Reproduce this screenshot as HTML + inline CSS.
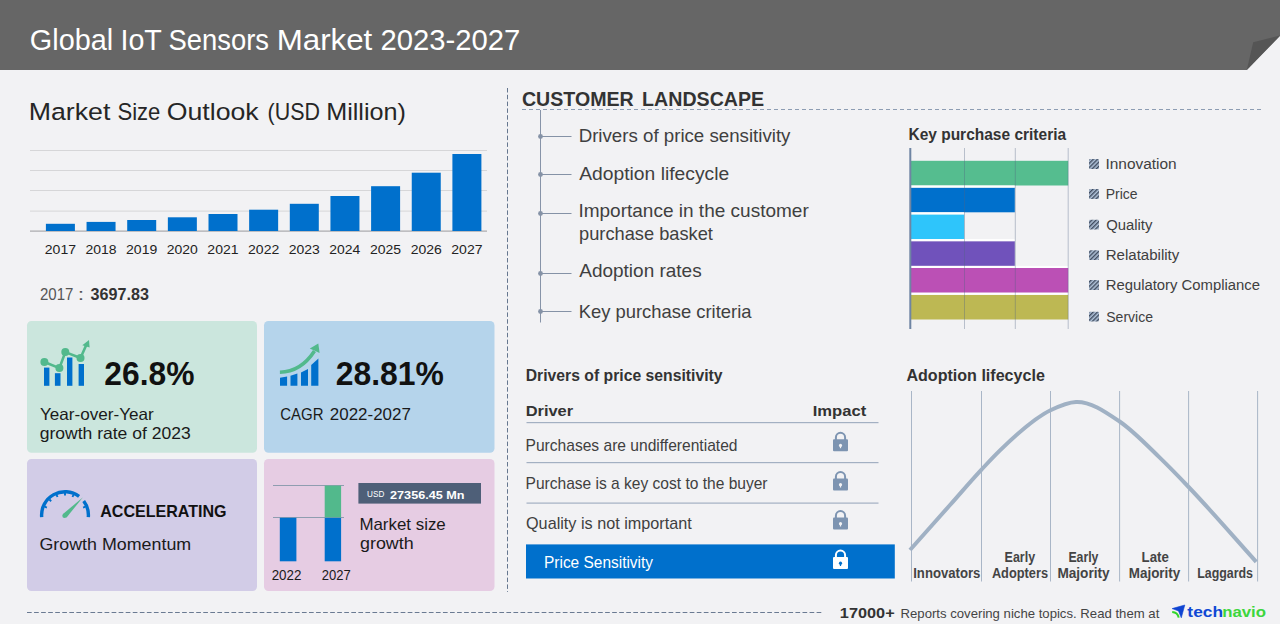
<!DOCTYPE html>
<html><head><meta charset="utf-8"><style>
html,body{margin:0;padding:0;background:#f2f2f4;width:1280px;height:624px;overflow:hidden}
svg{display:block}
text{font-family:"Liberation Sans",sans-serif;white-space:pre}
</style></head><body>
<svg width="1280" height="624" viewBox="0 0 1280 624">
<rect x="0" y="0" width="1280" height="624" fill="#f2f2f4"/>
<polygon points="0,0 1280,0 1280,36 1246.8,70 0,70" fill="#666666"/>
<polygon points="1246.8,70 1253.2,42.3 1280,35.5" fill="#555555"/>
<rect x="30" y="150" width="457" height="1" fill="#d6d6d8"/>
<rect x="30" y="170" width="457" height="1" fill="#d6d6d8"/>
<rect x="30" y="190" width="457" height="1" fill="#d6d6d8"/>
<rect x="30" y="210.6" width="457" height="1" fill="#d6d6d8"/>
<rect x="30" y="230.5" width="457" height="1.2" fill="#a9a9ab"/>
<rect x="45.90" y="223.8" width="29.0" height="7.20" fill="#0070cc"/>
<rect x="86.55" y="221.9" width="29.0" height="9.10" fill="#0070cc"/>
<rect x="127.20" y="220" width="29.0" height="11.00" fill="#0070cc"/>
<rect x="167.85" y="217.3" width="29.0" height="13.70" fill="#0070cc"/>
<rect x="208.50" y="214" width="29.0" height="17.00" fill="#0070cc"/>
<rect x="249.15" y="209.7" width="29.0" height="21.30" fill="#0070cc"/>
<rect x="289.80" y="203.8" width="29.0" height="27.20" fill="#0070cc"/>
<rect x="330.45" y="196" width="29.0" height="35.00" fill="#0070cc"/>
<rect x="371.10" y="186.2" width="29.0" height="44.80" fill="#0070cc"/>
<rect x="411.75" y="172.7" width="29.0" height="58.30" fill="#0070cc"/>
<rect x="452.40" y="154" width="29.0" height="77.00" fill="#0070cc"/>
<rect x="27" y="321" width="230" height="131.8" rx="4.5" fill="#cbe6dd"/>
<rect x="264" y="321" width="230.5" height="131.8" rx="4.5" fill="#b5d4eb"/>
<rect x="27" y="459" width="230" height="132" rx="4.5" fill="#d2cce7"/>
<rect x="264" y="459" width="230.5" height="132" rx="4.5" fill="#e6cce3"/>
<rect x="44" y="367.6" width="5.399999999999999" height="18.20" fill="#0070cc"/>
<rect x="54.9" y="373.2" width="5.600000000000001" height="12.60" fill="#0070cc"/>
<rect x="67" y="357.5" width="5.400000000000006" height="28.30" fill="#0070cc"/>
<rect x="78.6" y="364" width="5.400000000000006" height="21.80" fill="#0070cc"/>
<polyline points="44.4,362 59.4,368.1 65.3,352.1 80.5,358 86.5,344.5" fill="none" stroke="#52b98c" stroke-width="2.6" stroke-linejoin="round"/>
<circle cx="44.4" cy="362" r="4" fill="#52b98c"/>
<circle cx="59.4" cy="368.1" r="4" fill="#52b98c"/>
<circle cx="65.3" cy="352.1" r="4" fill="#52b98c"/>
<circle cx="80.5" cy="358" r="4" fill="#52b98c"/>
<polygon points="89,340 82.3,345.2 89.6,347.6" fill="#52b98c"/>
<polygon points="280,377.8 287.1,376.5 287.1,385.7 280,385.7" fill="#0070cc"/>
<polygon points="290.5,375.8 297.4,373.6 297.4,385.7 290.5,385.7" fill="#0070cc"/>
<polygon points="301,372.5 308,369.0 308,385.7 301,385.7" fill="#0070cc"/>
<polygon points="311.2,365 318.4,358.6 318.4,385.7 311.2,385.7" fill="#0070cc"/>
<path d="M279.9,372.2 C294,372 306,364 314.5,351" fill="none" stroke="#52b98c" stroke-width="3.6"/>
<polygon points="318.3,343.6 309.8,348.6 319.6,353" fill="#52b98c"/>
<path d="M41.69,517.14 A23.4,23.4 0 0 1 79.08,496.41" fill="none" stroke="#0070cc" stroke-width="3.4"/>
<path d="M83.69,501.02 A23.4,23.4 0 0 1 88.31,517.14" fill="none" stroke="#0070cc" stroke-width="3.4"/>
<line x1="44.67" y1="506.68" x2="46.89" y2="507.60" stroke="#0070cc" stroke-width="1.9"/>
<line x1="49.44" y1="499.54" x2="51.14" y2="501.24" stroke="#0070cc" stroke-width="1.9"/>
<line x1="56.58" y1="494.77" x2="57.50" y2="496.99" stroke="#0070cc" stroke-width="1.9"/>
<line x1="65.00" y1="493.10" x2="65.00" y2="495.50" stroke="#0070cc" stroke-width="1.9"/>
<line x1="73.42" y1="494.77" x2="72.50" y2="496.99" stroke="#0070cc" stroke-width="1.9"/>
<line x1="85.33" y1="506.68" x2="83.11" y2="507.60" stroke="#0070cc" stroke-width="1.9"/>
<polygon points="63,514 66.6,517.4 83,497.2" fill="#52b98c"/>
<circle cx="64.6" cy="515.8" r="2.3" fill="#52b98c"/>
<rect x="273" y="485" width="71" height="1" fill="#8f9db0"/>
<rect x="273" y="517" width="71" height="1" fill="#8f9db0"/>
<rect x="279.8" y="517.8" width="16.6" height="43.5" fill="#0070cc"/>
<rect x="324.7" y="517.8" width="16.4" height="43.5" fill="#0070cc"/>
<rect x="324.7" y="485.6" width="16.4" height="31.7" fill="#52b98c"/>
<rect x="358.4" y="483" width="122.6" height="20.6" fill="#4e5f78"/>
<line x1="507.5" y1="88" x2="507.5" y2="592" stroke="#66778f" stroke-width="1" stroke-dasharray="4.5 2.3"/>
<line x1="27" y1="612.5" x2="823" y2="612.5" stroke="#6a7a92" stroke-width="1" stroke-dasharray="4.7 2.35"/>
<line x1="522" y1="109.5" x2="1262" y2="109.5" stroke="#8d9db3" stroke-width="1" stroke-dasharray="4 3"/>
<rect x="540" y="110" width="1" height="212.5" fill="#8794a8"/>
<rect x="540" y="136" width="31.5" height="1" fill="#8592a6"/>
<circle cx="540.5" cy="136.5" r="2.4" fill="#8592a6"/>
<rect x="540" y="174" width="31.5" height="1" fill="#8592a6"/>
<circle cx="540.5" cy="174.5" r="2.4" fill="#8592a6"/>
<rect x="540" y="213" width="31.5" height="1" fill="#8592a6"/>
<circle cx="540.5" cy="213.5" r="2.4" fill="#8592a6"/>
<rect x="540" y="273" width="31.5" height="1" fill="#8592a6"/>
<circle cx="540.5" cy="273.5" r="2.4" fill="#8592a6"/>
<rect x="540" y="311" width="31.5" height="1" fill="#8592a6"/>
<circle cx="540.5" cy="311.5" r="2.4" fill="#8592a6"/>
<rect x="911" y="160.8" width="157.2" height="24.7" fill="#55bd8f"/>
<rect x="911" y="187.6" width="103.8" height="24.7" fill="#0070cc"/>
<rect x="911" y="185.5" width="103.8" height="2.1" fill="#ffffff"/>
<rect x="911" y="214.4" width="53.2" height="24.7" fill="#2ec5fb"/>
<rect x="911" y="212.3" width="53.2" height="2.1" fill="#ffffff"/>
<rect x="911" y="241.2" width="103.8" height="24.7" fill="#7052bb"/>
<rect x="911" y="239.1" width="103.8" height="2.1" fill="#ffffff"/>
<rect x="911" y="268.0" width="157.2" height="24.7" fill="#bb50b5"/>
<rect x="911" y="265.9" width="157.2" height="2.1" fill="#ffffff"/>
<rect x="911" y="294.8" width="157.2" height="24.7" fill="#bdb853"/>
<rect x="911" y="292.7" width="157.2" height="2.1" fill="#ffffff"/>
<rect x="964.0" y="148" width="1" height="181" fill="rgb(80,100,130)" fill-opacity="0.36"/>
<rect x="1014.8" y="148" width="1" height="181" fill="rgb(80,100,130)" fill-opacity="0.36"/>
<rect x="1067.7" y="148" width="1" height="181" fill="rgb(80,100,130)" fill-opacity="0.36"/>
<rect x="909.3" y="148" width="2" height="181" fill="#6f85a3"/>
<defs><pattern id="hatch" width="3" height="3" patternUnits="userSpaceOnUse" patternTransform="rotate(45)"><rect width="3" height="3" fill="#b0c2d8"/><rect width="1.4" height="3" fill="#3f4b5e"/></pattern></defs>
<rect x="1089" y="159.1" width="10" height="9.8" rx="1" fill="url(#hatch)"/>
<rect x="1089" y="189.1" width="10" height="9.8" rx="1" fill="url(#hatch)"/>
<rect x="1089" y="219.8" width="10" height="9.8" rx="1" fill="url(#hatch)"/>
<rect x="1089" y="250.3" width="10" height="9.8" rx="1" fill="url(#hatch)"/>
<rect x="1089" y="280.1" width="10" height="9.8" rx="1" fill="url(#hatch)"/>
<rect x="1089" y="311.8" width="10" height="9.8" rx="1" fill="url(#hatch)"/>
<rect x="526.5" y="422.0" width="352" height="1.2" fill="#a3b0c2"/>
<rect x="526.5" y="462.0" width="352" height="1.2" fill="#a3b0c2"/>
<rect x="526.5" y="502.5" width="352" height="1.2" fill="#a3b0c2"/>
<rect x="526" y="544.4" width="368.8" height="34.1" fill="#0070cc"/>
<path d="M835.9,440.2 V437.4 A4.6,4.6 0 0 1 845.1,437.4 V440.2" fill="none" stroke="#7d94b1" stroke-width="2"/>
<rect x="833.0" y="439.2" width="15" height="12" rx="1" fill="#7d94b1"/>
<circle cx="840.5" cy="445.4" r="1.6" fill="#f2f2f4"/>
<rect x="839.9" y="445.4" width="1.2" height="2.8" fill="#f2f2f4"/>
<path d="M835.9,479.5 V476.7 A4.6,4.6 0 0 1 845.1,476.7 V479.5" fill="none" stroke="#7d94b1" stroke-width="2"/>
<rect x="833.0" y="478.5" width="15" height="12" rx="1" fill="#7d94b1"/>
<circle cx="840.5" cy="484.7" r="1.6" fill="#f2f2f4"/>
<rect x="839.9" y="484.7" width="1.2" height="2.8" fill="#f2f2f4"/>
<path d="M835.9,518.5 V515.7 A4.6,4.6 0 0 1 845.1,515.7 V518.5" fill="none" stroke="#7d94b1" stroke-width="2"/>
<rect x="833.0" y="517.5" width="15" height="12" rx="1" fill="#7d94b1"/>
<circle cx="840.5" cy="523.7" r="1.6" fill="#f2f2f4"/>
<rect x="839.9" y="523.7" width="1.2" height="2.8" fill="#f2f2f4"/>
<path d="M835.9,558 V555.2 A4.6,4.6 0 0 1 845.1,555.2 V558" fill="none" stroke="#ffffff" stroke-width="2"/>
<rect x="833.0" y="557" width="15" height="12" rx="1" fill="#ffffff"/>
<circle cx="840.5" cy="563.2" r="1.6" fill="#0070cc"/>
<rect x="839.9" y="563.2" width="1.2" height="2.8" fill="#0070cc"/>
<rect x="911.0" y="391" width="1" height="190.5" fill="#a9b6c7"/>
<rect x="981.0" y="391" width="1" height="190.5" fill="#a9b6c7"/>
<rect x="1050.0" y="391" width="1" height="190.5" fill="#a9b6c7"/>
<rect x="1119.1" y="391" width="1" height="190.5" fill="#a9b6c7"/>
<rect x="1188.1" y="391" width="1" height="190.5" fill="#a9b6c7"/>
<rect x="1257.1" y="391" width="1" height="190.5" fill="#a9b6c7"/>
<path d="M910.0,550.0 C923.3,535.0 936.7,520.0 950.0,505.0 C960.5,493.2 971.0,480.8 981.5,469.6 C987.7,463.0 993.8,456.4 1000.0,450.4 C1016.8,434.0 1033.7,418.3 1050.5,410.2 C1059.0,406.1 1067.5,402.2 1076.0,401.9 C1090.5,401.3 1105.1,411.6 1119.6,421.5 C1133.1,430.7 1146.5,444.8 1160.0,457.9 C1169.5,467.1 1179.1,477.0 1188.6,487.0 C1211.1,510.5 1233.7,536.9 1256.2,561.8" fill="none" stroke="#a0b1c4" stroke-width="4" stroke-linecap="butt"/>
<polygon points="1172.1,608.6 1184.8,605.0 1181.3,617.8 1178.5,610.9" fill="#0f44d2" stroke="#0f44d2" stroke-width="0.6" stroke-linejoin="round"/>
<path d="M1172.2,612.0 Q1177.6,612.4 1178.7,617.6" fill="none" stroke="#33d62a" stroke-width="2"/>
<text x="29.80" y="49.50" textLength="83.38" lengthAdjust="spacingAndGlyphs" font-size="29.5" font-weight="400" fill="#ffffff">Global</text>
<text x="120.45" y="49.50" textLength="41.46" lengthAdjust="spacingAndGlyphs" font-size="29.5" font-weight="400" fill="#ffffff">IoT</text>
<text x="168.56" y="49.50" textLength="100.53" lengthAdjust="spacingAndGlyphs" font-size="29.5" font-weight="400" fill="#ffffff">Sensors</text>
<text x="276.73" y="49.50" textLength="95.59" lengthAdjust="spacingAndGlyphs" font-size="29.5" font-weight="400" fill="#ffffff">Market</text>
<text x="380.43" y="49.50" textLength="139.79" lengthAdjust="spacingAndGlyphs" font-size="29.5" font-weight="400" fill="#ffffff">2023-2027</text>
<text x="28.71" y="120.00" textLength="81.69" lengthAdjust="spacingAndGlyphs" font-size="24.3" font-weight="400" fill="#262626">Market</text>
<text x="117.40" y="120.00" textLength="42.99" lengthAdjust="spacingAndGlyphs" font-size="24.3" font-weight="400" fill="#262626">Size</text>
<text x="166.74" y="120.00" textLength="91.98" lengthAdjust="spacingAndGlyphs" font-size="24.3" font-weight="400" fill="#262626">Outlook</text>
<text x="267.57" y="120.00" textLength="52.35" lengthAdjust="spacingAndGlyphs" font-size="24.3" font-weight="400" fill="#262626">(USD</text>
<text x="326.23" y="120.00" textLength="79.73" lengthAdjust="spacingAndGlyphs" font-size="24.3" font-weight="400" fill="#262626">Million)</text>
<text x="44.79" y="253.50" textLength="31.21" lengthAdjust="spacingAndGlyphs" font-size="13.2" font-weight="400" fill="#222222">2017</text>
<text x="85.45" y="253.50" textLength="31.11" lengthAdjust="spacingAndGlyphs" font-size="13.2" font-weight="400" fill="#222222">2018</text>
<text x="126.09" y="253.50" textLength="31.17" lengthAdjust="spacingAndGlyphs" font-size="13.2" font-weight="400" fill="#222222">2019</text>
<text x="166.75" y="253.50" textLength="31.05" lengthAdjust="spacingAndGlyphs" font-size="13.2" font-weight="400" fill="#222222">2020</text>
<text x="207.39" y="253.50" textLength="31.19" lengthAdjust="spacingAndGlyphs" font-size="13.2" font-weight="400" fill="#222222">2021</text>
<text x="248.04" y="253.50" textLength="31.21" lengthAdjust="spacingAndGlyphs" font-size="13.2" font-weight="400" fill="#222222">2022</text>
<text x="288.70" y="253.50" textLength="31.12" lengthAdjust="spacingAndGlyphs" font-size="13.2" font-weight="400" fill="#222222">2023</text>
<text x="329.35" y="253.50" textLength="30.91" lengthAdjust="spacingAndGlyphs" font-size="13.2" font-weight="400" fill="#222222">2024</text>
<text x="370.00" y="253.50" textLength="31.09" lengthAdjust="spacingAndGlyphs" font-size="13.2" font-weight="400" fill="#222222">2025</text>
<text x="410.65" y="253.50" textLength="31.12" lengthAdjust="spacingAndGlyphs" font-size="13.2" font-weight="400" fill="#222222">2026</text>
<text x="451.29" y="253.50" textLength="31.21" lengthAdjust="spacingAndGlyphs" font-size="13.2" font-weight="400" fill="#222222">2027</text>
<text x="39.94" y="299.80" textLength="33.41" lengthAdjust="spacingAndGlyphs" font-size="16" font-weight="400" fill="#555555">2017</text>
<text x="77.70" y="299.80" textLength="6.40" lengthAdjust="spacingAndGlyphs" font-size="16" font-weight="400" fill="#555555">:</text>
<text x="90.63" y="299.80" textLength="58.25" lengthAdjust="spacingAndGlyphs" font-size="16" font-weight="700" fill="#333333">3697.83</text>
<text x="104.30" y="384.60" textLength="90.14" lengthAdjust="spacingAndGlyphs" font-size="33" font-weight="700" fill="#111111">26.8%</text>
<text x="40.02" y="420.00" textLength="113.76" lengthAdjust="spacingAndGlyphs" font-size="16.5" font-weight="400" fill="#1a1a1a">Year-over-Year</text>
<text x="39.66" y="438.70" textLength="151.11" lengthAdjust="spacingAndGlyphs" font-size="16.5" font-weight="400" fill="#1a1a1a">growth rate of 2023</text>
<text x="335.69" y="384.50" textLength="108.15" lengthAdjust="spacingAndGlyphs" font-size="33" font-weight="700" fill="#111111">28.81%</text>
<text x="280.24" y="420.00" textLength="43.25" lengthAdjust="spacingAndGlyphs" font-size="16.5" font-weight="400" fill="#1a1a1a">CAGR</text>
<text x="329.85" y="420.00" textLength="81.00" lengthAdjust="spacingAndGlyphs" font-size="16.5" font-weight="400" fill="#1a1a1a">2022-2027</text>
<text x="100.20" y="516.90" textLength="126.40" lengthAdjust="spacingAndGlyphs" font-size="16.9" font-weight="700" fill="#111111">ACCELERATING</text>
<text x="39.50" y="549.80" textLength="151.67" lengthAdjust="spacingAndGlyphs" font-size="16.5" font-weight="400" fill="#1a1a1a">Growth Momentum</text>
<text x="367.07" y="496.80" textLength="17.22" lengthAdjust="spacingAndGlyphs" font-size="9.6" font-weight="400" fill="#ffffff">USD</text>
<text x="390.06" y="498.80" textLength="74.52" lengthAdjust="spacingAndGlyphs" font-size="11.2" font-weight="700" fill="#ffffff">27356.45 Mn</text>
<text x="359.41" y="529.80" textLength="86.34" lengthAdjust="spacingAndGlyphs" font-size="16.4" font-weight="400" fill="#1a1a1a">Market size</text>
<text x="360.05" y="549.00" textLength="53.61" lengthAdjust="spacingAndGlyphs" font-size="16.4" font-weight="400" fill="#1a1a1a">growth</text>
<text x="271.63" y="579.80" textLength="29.74" lengthAdjust="spacingAndGlyphs" font-size="13.8" font-weight="400" fill="#1a1a1a">2022</text>
<text x="321.64" y="579.80" textLength="29.01" lengthAdjust="spacingAndGlyphs" font-size="13.8" font-weight="400" fill="#1a1a1a">2027</text>
<text x="521.90" y="105.60" textLength="111.81" lengthAdjust="spacingAndGlyphs" font-size="20.8" font-weight="700" fill="#333333">CUSTOMER</text>
<text x="642.09" y="105.60" textLength="122.08" lengthAdjust="spacingAndGlyphs" font-size="20.8" font-weight="700" fill="#333333">LANDSCAPE</text>
<text x="578.67" y="142.00" textLength="211.77" lengthAdjust="spacingAndGlyphs" font-size="18.8" font-weight="400" fill="#404040">Drivers of price sensitivity</text>
<text x="579.26" y="180.00" textLength="149.89" lengthAdjust="spacingAndGlyphs" font-size="18.8" font-weight="400" fill="#404040">Adoption lifecycle</text>
<text x="578.44" y="217.00" textLength="230.27" lengthAdjust="spacingAndGlyphs" font-size="18.2" font-weight="400" fill="#404040">Importance in the customer</text>
<text x="579.02" y="240.00" textLength="133.91" lengthAdjust="spacingAndGlyphs" font-size="18.2" font-weight="400" fill="#404040">purchase basket</text>
<text x="579.26" y="276.70" textLength="122.42" lengthAdjust="spacingAndGlyphs" font-size="18.2" font-weight="400" fill="#404040">Adoption rates</text>
<text x="578.69" y="318.40" textLength="172.81" lengthAdjust="spacingAndGlyphs" font-size="18.2" font-weight="400" fill="#404040">Key purchase criteria</text>
<text x="908.46" y="140.20" textLength="157.64" lengthAdjust="spacingAndGlyphs" font-size="17" font-weight="700" fill="#333333">Key purchase criteria</text>
<text x="1105.48" y="168.80" textLength="71.23" lengthAdjust="spacingAndGlyphs" font-size="15.3" font-weight="400" fill="#404040">Innovation</text>
<text x="1105.75" y="198.80" textLength="31.87" lengthAdjust="spacingAndGlyphs" font-size="15.3" font-weight="400" fill="#404040">Price</text>
<text x="1106.20" y="229.50" textLength="46.23" lengthAdjust="spacingAndGlyphs" font-size="15.3" font-weight="400" fill="#404040">Quality</text>
<text x="1105.66" y="260.00" textLength="73.66" lengthAdjust="spacingAndGlyphs" font-size="15.3" font-weight="400" fill="#404040">Relatability</text>
<text x="1105.68" y="289.80" textLength="154.28" lengthAdjust="spacingAndGlyphs" font-size="15.3" font-weight="400" fill="#404040">Regulatory Compliance</text>
<text x="1106.26" y="321.50" textLength="46.76" lengthAdjust="spacingAndGlyphs" font-size="15.3" font-weight="400" fill="#404040">Service</text>
<text x="525.75" y="380.90" textLength="196.74" lengthAdjust="spacingAndGlyphs" font-size="17.2" font-weight="700" fill="#333333">Drivers of price sensitivity</text>
<text x="525.70" y="415.80" textLength="47.45" lengthAdjust="spacingAndGlyphs" font-size="15" font-weight="700" fill="#333333">Driver</text>
<text x="812.69" y="415.80" textLength="53.51" lengthAdjust="spacingAndGlyphs" font-size="15" font-weight="700" fill="#333333">Impact</text>
<text x="525.52" y="451.20" textLength="211.98" lengthAdjust="spacingAndGlyphs" font-size="16.6" font-weight="400" fill="#404040">Purchases are undifferentiated</text>
<text x="525.52" y="489.10" textLength="242.03" lengthAdjust="spacingAndGlyphs" font-size="16.6" font-weight="400" fill="#404040">Purchase is a key cost to the buyer</text>
<text x="526.03" y="529.30" textLength="165.69" lengthAdjust="spacingAndGlyphs" font-size="16.6" font-weight="400" fill="#404040">Quality is not important</text>
<text x="544.03" y="568.00" textLength="109.00" lengthAdjust="spacingAndGlyphs" font-size="16.8" font-weight="400" fill="#ffffff">Price Sensitivity</text>
<text x="906.40" y="380.90" textLength="138.45" lengthAdjust="spacingAndGlyphs" font-size="17.2" font-weight="700" fill="#333333">Adoption lifecycle</text>
<text x="913.22" y="578.00" textLength="67.12" lengthAdjust="spacingAndGlyphs" font-size="14" font-weight="700" fill="#444444">Innovators</text>
<text x="1004.57" y="561.80" textLength="30.50" lengthAdjust="spacingAndGlyphs" font-size="14" font-weight="700" fill="#444444">Early</text>
<text x="991.88" y="578.00" textLength="56.14" lengthAdjust="spacingAndGlyphs" font-size="14" font-weight="700" fill="#444444">Adopters</text>
<text x="1068.38" y="561.80" textLength="30.09" lengthAdjust="spacingAndGlyphs" font-size="14" font-weight="700" fill="#444444">Early</text>
<text x="1057.39" y="578.00" textLength="52.29" lengthAdjust="spacingAndGlyphs" font-size="14" font-weight="700" fill="#444444">Majority</text>
<text x="1141.61" y="561.80" textLength="27.24" lengthAdjust="spacingAndGlyphs" font-size="14" font-weight="700" fill="#444444">Late</text>
<text x="1128.80" y="578.00" textLength="51.47" lengthAdjust="spacingAndGlyphs" font-size="14" font-weight="700" fill="#444444">Majority</text>
<text x="1197.17" y="578.00" textLength="55.84" lengthAdjust="spacingAndGlyphs" font-size="14" font-weight="700" fill="#444444">Laggards</text>
<text x="839.87" y="617.90" textLength="54.79" lengthAdjust="spacingAndGlyphs" font-size="15.2" font-weight="700" fill="#333333">17000+</text>
<text x="900.52" y="617.90" textLength="258.78" lengthAdjust="spacingAndGlyphs" font-size="12.8" font-weight="400" fill="#444444">Reports covering niche topics. Read them at</text>
<text x="1187.39" y="617.10" textLength="35.59" lengthAdjust="spacingAndGlyphs" font-size="15.2" font-weight="700" fill="#0f48d4">tech</text>
<text x="1222.19" y="617.10" textLength="43.86" lengthAdjust="spacingAndGlyphs" font-size="15.2" font-weight="700" fill="#3dd63d">navio</text>
</svg>
</body></html>
